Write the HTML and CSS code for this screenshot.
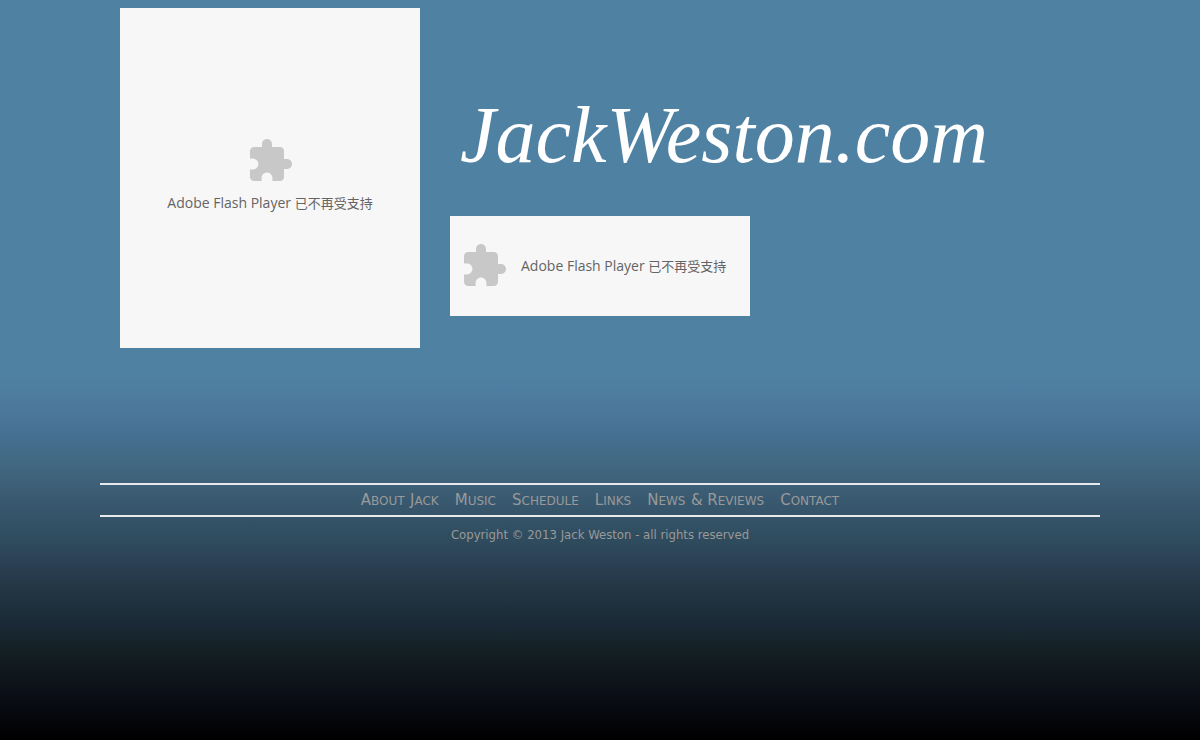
FILE: index.html
```html
<!DOCTYPE html>
<html lang="en">
<head>
    <meta charset="UTF-8">
    <meta name="viewport" content="width=device-width, initial-scale=1.0">
    <title>JackWeston.com</title>
    <link rel="stylesheet" href="styles.css">
</head>
<body>

    <div class="container">
        <div class="header">
            <div class="plugin plugin-tall">
                <svg class="plugin-icon" viewBox="0 0 24 24" aria-hidden="true">
                    <path d="M20.5 11H19V7c0-1.1-.9-2-2-2h-4V3.5C13 2.12 11.88 1 10.5 1S8 2.12 8 3.5V5H4c-1.1 0-1.99.9-1.99 2v3.8H3.5c1.49 0 2.7 1.21 2.7 2.7s-1.21 2.7-2.7 2.7H2V20c0 1.1.9 2 2 2h3.8v-1.5c0-1.49 1.21-2.7 2.7-2.7s2.7 1.21 2.7 2.7V22H17c1.1 0 2-.9 2-2v-4h1.5c1.38 0 2.5-1.12 2.5-2.5S21.88 11 20.5 11z"/>
                </svg>
                <span>Adobe Flash Player <span class="zh" lang="zh-CN">已不再受支持</span></span>
            </div>
            <div class="title">
                <h1>JackWeston.com</h1>
                <div class="plugin plugin-wide">
                    <svg class="plugin-icon" viewBox="0 0 24 24" aria-hidden="true">
                        <path d="M20.5 11H19V7c0-1.1-.9-2-2-2h-4V3.5C13 2.12 11.88 1 10.5 1S8 2.12 8 3.5V5H4c-1.1 0-1.99.9-1.99 2v3.8H3.5c1.49 0 2.7 1.21 2.7 2.7s-1.21 2.7-2.7 2.7H2V20c0 1.1.9 2 2 2h3.8v-1.5c0-1.49 1.21-2.7 2.7-2.7s2.7 1.21 2.7 2.7V22H17c1.1 0 2-.9 2-2v-4h1.5c1.38 0 2.5-1.12 2.5-2.5S21.88 11 20.5 11z"/>
                    </svg>
                    <span>Adobe Flash Player <span class="zh" lang="zh-CN">已不再受支持</span></span>
                </div>
            </div>
        </div>

        <div class="footer">
            <nav class="menu">
                <a href="#about"><span class="cap">A</span>bout <span class="cap">J</span>ack</a>
                <a href="#music"><span class="cap">M</span>usic</a>
                <a href="#schedule"><span class="cap">S</span>chedule</a>
                <a href="#links"><span class="cap">L</span>inks</a>
                <a href="#news"><span class="cap">N</span>ews <span class="cap">&amp; R</span>eviews</a>
                <a href="#contact"><span class="cap">C</span>ontact</a>
            </nav>
            <p class="copyright">Copyright © 2013 Jack Weston - all rights reserved</p>
        </div>
    </div>

</body>
</html>
```

FILE: styles.css
```css
* {
    margin: 0;
    padding: 0;
    box-sizing: border-box;
}
body {
    min-height: 100vh;
    padding: 8px;
    font-family: "DejaVu Sans", sans-serif;
    color: #999;
    background: #000 linear-gradient(#4f81a3 375px, #4b789c 410px, #456e8f 440px, #426a83 460px, #3e627a 480px, #395970 500px, #2f4c5e 540px, #2a3e52 568px, #243744 586px, #1b2b38 620px, #131e22 655px, #0a0c15 700px, #000 740px) no-repeat;
}
.container {
    max-width: 1000px;
    margin: 0 auto;
}
.header {
    display: flex;
    flex-wrap: wrap;
    gap: 30px;
    padding: 0 20px;
}
.title {
    padding-top: 82px;
}
.title h1 {
    padding-left: 10px;
    margin-bottom: 36px;
    font-family: "Lucida Calligraphy", "Liberation Serif", serif;
    font-size: 80px;
    font-style: italic;
    font-weight: normal;
    line-height: 90px;
    color: #fff;
}
.plugin {
    display: flex;
    align-items: center;
    width: 300px;
    background-color: #f7f7f7;
    color: #646464;
    font-family: "Open Sans", "Noto Sans CJK SC", sans-serif;
    font-size: 14px;
    line-height: 20px;
}
.plugin .zh {
    font-size: 13px;
}
.plugin-tall {
    flex-direction: column;
    justify-content: center;
    gap: 8px;
    height: 340px;
    padding-bottom: 6px;
}
.plugin-wide {
    gap: 13px;
    height: 100px;
    padding-left: 10px;
}
.plugin-icon {
    width: 48px;
    height: 48px;
    fill: #c8c8c8;
}
.footer {
    margin-top: 135px;
    text-align: center;
}
.menu {
    display: flex;
    flex-wrap: wrap;
    justify-content: center;
    gap: 16px;
    padding: 6px 0;
    border-top: 2px solid #e6eaec;
    border-bottom: 2px solid #e6eaec;
    font-size: 17px;
    font-variant: small-caps;
    line-height: 17px;
}
.menu a {
    color: #999;
    text-decoration: none;
}
.menu a:hover {
    color: #fff;
}
.menu .cap {
    font-size: 15px;
}
.copyright {
    margin-top: 9px;
    font-family: "Comic Sans MS", "DejaVu Sans Condensed", sans-serif;
    font-size: 13px;
    line-height: 18px;
}
```
